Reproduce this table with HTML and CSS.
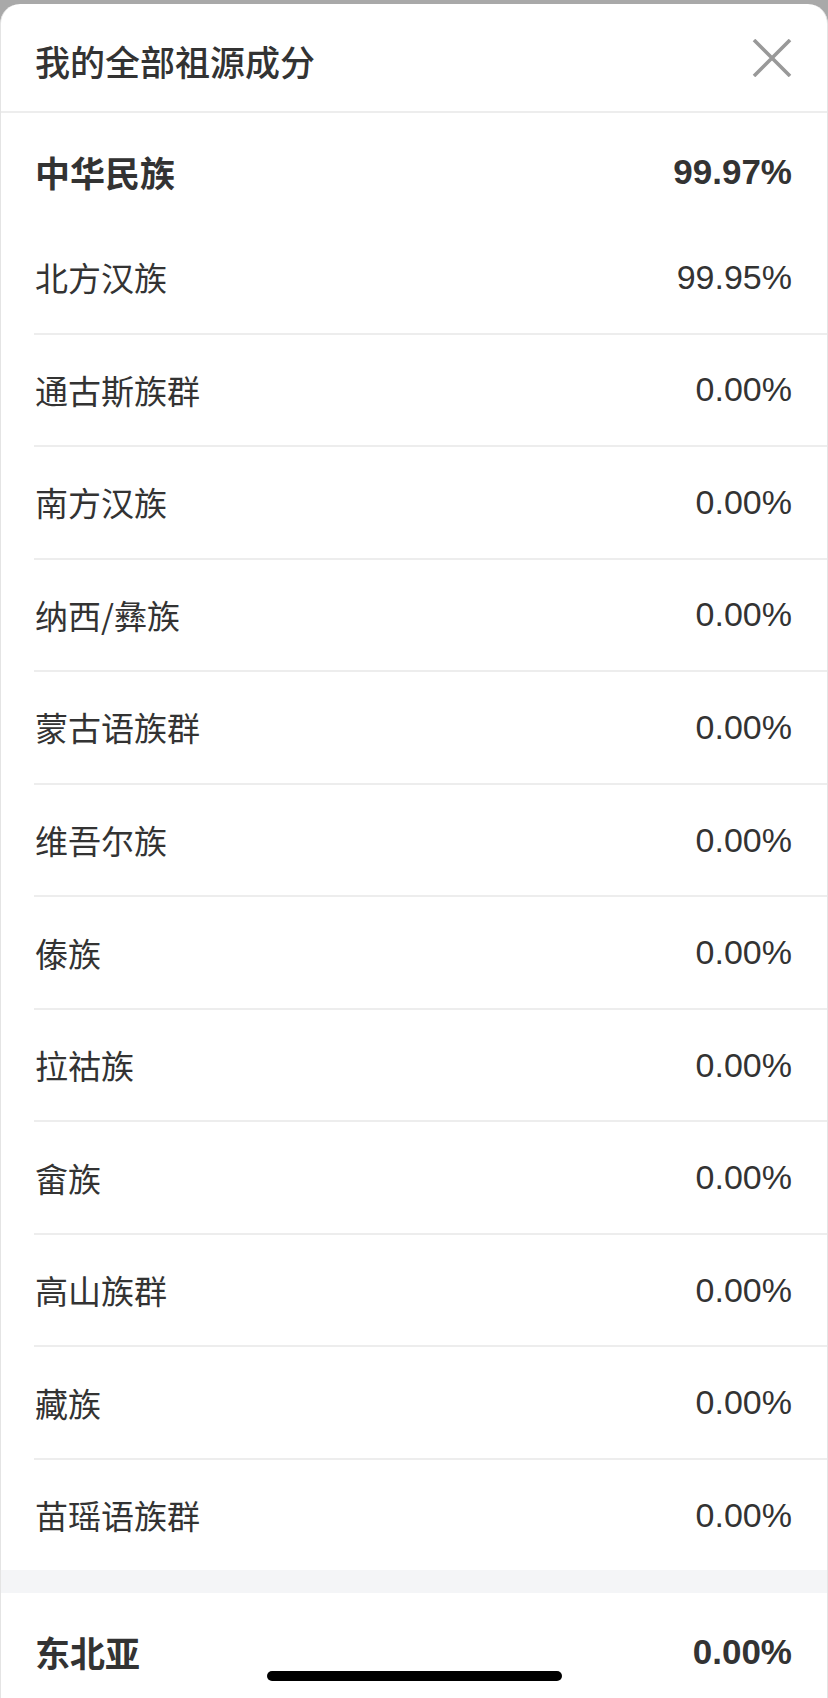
FILE: index.html
```html
<!DOCTYPE html>
<html lang="zh-CN">
<head>
  <meta charset="UTF-8">
  <title>我的全部祖源成分</title>
  <link rel="stylesheet" href="styles.css">
</head>
<body>

  <div class="sheet">
    <header class="sheet-head">
      <h1>我的全部祖源成分</h1>
      <button class="close" aria-label="关闭">
        <svg width="40" height="38" viewBox="0 0 40 38">
          <path d="M2 1 L38 37 M38 1 L2 37" stroke="#999" stroke-width="3.6" fill="none"/>
        </svg>
      </button>
    </header>

    <section class="group">
      <div class="group-head">
        <span class="name">中华民族</span>
        <span class="pct">99.97%</span>
      </div>
      <ul class="rows">
        <li class="row"><span class="name">北方汉族</span><span class="pct">99.95%</span></li>
        <li class="row"><span class="name">通古斯族群</span><span class="pct">0.00%</span></li>
        <li class="row"><span class="name">南方汉族</span><span class="pct">0.00%</span></li>
        <li class="row"><span class="name">纳西/彝族</span><span class="pct">0.00%</span></li>
        <li class="row"><span class="name">蒙古语族群</span><span class="pct">0.00%</span></li>
        <li class="row"><span class="name">维吾尔族</span><span class="pct">0.00%</span></li>
        <li class="row"><span class="name">傣族</span><span class="pct">0.00%</span></li>
        <li class="row"><span class="name">拉祜族</span><span class="pct">0.00%</span></li>
        <li class="row"><span class="name">畲族</span><span class="pct">0.00%</span></li>
        <li class="row"><span class="name">高山族群</span><span class="pct">0.00%</span></li>
        <li class="row"><span class="name">藏族</span><span class="pct">0.00%</span></li>
        <li class="row"><span class="name">苗瑶语族群</span><span class="pct">0.00%</span></li>
      </ul>
    </section>

    <div class="gap"></div>

    <section class="group">
      <div class="group-head">
        <span class="name">东北亚</span>
        <span class="pct">0.00%</span>
      </div>
    </section>
  </div>

  <div class="home-bar"></div>

</body>
</html>
```

FILE: styles.css
```css
html, body {
  margin: 0;
  padding: 0;
  height: 100%;
}
body {
  background: #a9a9a9;
  font-family: "Liberation Sans", "Noto Sans CJK SC", sans-serif;
  color: #333;
  overflow: hidden;
}
.sheet {
  margin-top: 4px;
  background: #fff;
  border-left: 1px solid #e4e4e4;
  border-right: 1px solid #e4e4e4;
  border-radius: 20px 20px 0 0;
  min-height: 1694px;
  box-sizing: border-box;
}
.sheet-head {
  height: 109px;
  box-sizing: border-box;
  border-bottom: 2px solid #ededed;
  display: flex;
  align-items: center;
  justify-content: space-between;
  padding: 0 35px 0 34px;
}
.sheet-head h1 {
  margin: 7px 0 0;
  font-size: 35px;
  font-weight: 500;
  line-height: 40px;
  color: #333;
  font-family: "Noto Sans CJK SC", sans-serif;
}
.close {
  border: 0;
  background: none;
  padding: 0;
  margin-top: 1px;
  display: flex;
}
.group-head {
  height: 109px;
  box-sizing: border-box;
  padding: 8px 35px 0 34px;
  display: flex;
  align-items: center;
  justify-content: space-between;
}
.group-head .name {
  font-size: 35px;
  font-family: "Noto Sans CJK SC", sans-serif;
  font-weight: 600;
}
.group-head .pct {
  font-size: 35px;
  font-weight: bold;
}
.rows {
  list-style: none;
  margin: 0;
  padding: 0 0 0 33px;
}
.row {
  height: 112.56px;
  box-sizing: border-box;
  border-bottom: 2px solid #ededed;
  display: flex;
  align-items: center;
  justify-content: space-between;
  padding: 0 35px 0 1px;
}
.row:last-child {
  height: 110px;
  border-bottom: 0;
}
.row .name {
  font-size: 33px;
  font-family: "Noto Sans CJK SC", sans-serif;
}
.row .pct {
  font-size: 34px;
}
.gap {
  height: 23px;
  background: #f4f5f7;
}
.home-bar {
  position: fixed;
  left: 267px;
  top: 1671px;
  width: 295px;
  height: 10px;
  border-radius: 5px;
  background: #000;
}
```
